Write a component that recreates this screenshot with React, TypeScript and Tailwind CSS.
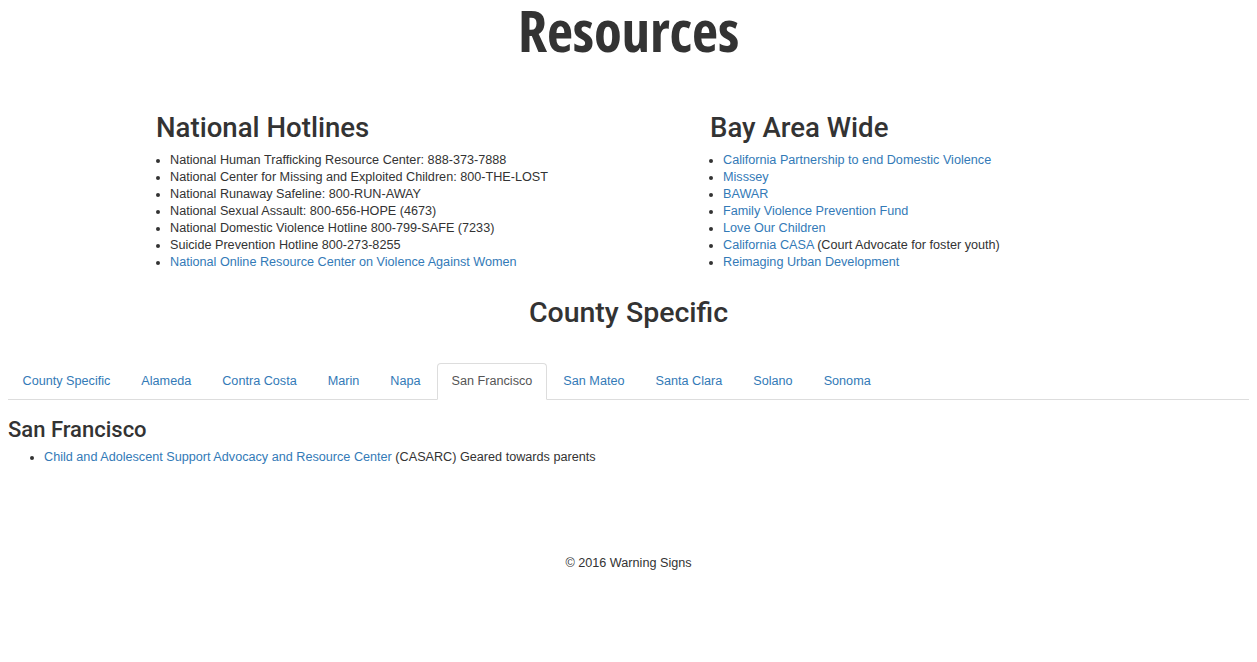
const hotlines = [
  "National Human Trafficking Resource Center: 888-373-7888",
  "National Center for Missing and Exploited Children: 800-THE-LOST",
  "National Runaway Safeline: 800-RUN-AWAY",
  "National Sexual Assault: 800-656-HOPE (4673)",
  "National Domestic Violence Hotline 800-799-SAFE (7233)",
  "Suicide Prevention Hotline 800-273-8255",
];

const tabs = [
  "County Specific",
  "Alameda",
  "Contra Costa",
  "Marin",
  "Napa",
  "San Francisco",
  "San Mateo",
  "Santa Clara",
  "Solano",
  "Sonoma",
];

const link = "text-[#337ab7]";
const heading = { fontFamily: 'Roboto, "Liberation Sans", sans-serif' };

export default function App() {
  return (
    <div className="min-h-[662px] bg-white px-2 text-[12.65px] leading-[17px] text-[#333]" style={{ fontFamily: '"Liberation Sans", Arial, sans-serif' }}>
      {/* Title */}
      <h1
        className="text-center text-[57px] font-bold leading-[60px] tracking-[-0.2px] font-stretch-[75%]"
        style={{ fontFamily: '"Open Sans", sans-serif' }}
      >
        Resources
      </h1>

      {/* Two columns */}
      <div className="mt-[51px] flex">
        <div className="w-[702px] pl-[148px]">
          <h2 className="text-[27.6px] font-medium leading-[33px]" style={heading}>National Hotlines</h2>
          <ul className="mt-[8px] list-disc pl-[14px]">
            {hotlines.map((h) => (
              <li key={h}>{h}</li>
            ))}
            <li>
              <a className={link}>National Online Resource Center on Violence Against Women</a>
            </li>
          </ul>
        </div>
        <div>
          <h2 className="text-[27.6px] font-medium leading-[33px]" style={heading}>Bay Area Wide</h2>
          <ul className="mt-[8px] list-disc pl-[13px]">
            <li><a className={link}>California Partnership to end Domestic Violence</a></li>
            <li><a className={link}>Misssey</a></li>
            <li><a className={link}>BAWAR</a></li>
            <li><a className={link}>Family Violence Prevention Fund</a></li>
            <li><a className={link}>Love Our Children</a></li>
            <li>
              <a className={link}>California CASA</a> (Court Advocate for foster youth)
            </li>
            <li><a className={link}>Reimaging Urban Development</a></li>
          </ul>
        </div>
      </div>

      <h2 className="mt-[25px] text-center text-[28.5px] font-medium leading-[33px]" style={heading}>County Specific</h2>

      {/* Tabs */}
      <ul className="mt-[34px] flex border-b border-[#ddd]">
        {tabs.map((t) => (
          <li key={t} className="mr-[2px] -mb-px">
            {t === "San Francisco" ? (
              <span className="block rounded-t-[4px] border border-[#ddd] border-b-white bg-white px-[13.5px] py-[10px] leading-[15px] text-[#555]">
                {t}
              </span>
            ) : (
              <a className={`block border border-transparent px-[13.5px] py-[10px] leading-[15px] ${link}`}>{t}</a>
            )}
          </li>
        ))}
      </ul>

      {/* Tab content */}
      <h3 className="mt-[17px] text-[22px] font-medium leading-[26px]" style={heading}>San Francisco</h3>
      <ul className="mt-[6px] list-disc pl-[36px]">
        <li>
          <a className={link}>Child and Adolescent Support Advocacy and Resource Center</a> (CASARC) Geared towards parents
        </li>
      </ul>

      <footer className="mt-[89px] text-center">© 2016 Warning Signs</footer>
    </div>
  );
}
